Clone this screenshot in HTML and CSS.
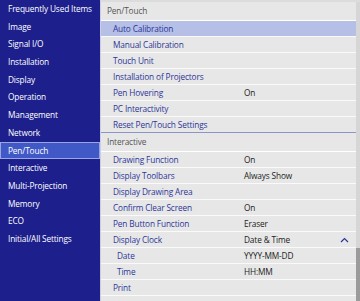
FILE: index.html
```html
<!DOCTYPE html>
<html lang="en">
<head>
  <meta charset="UTF-8" />
  <title>Pen/Touch menu</title>
  <link rel="stylesheet" href="styles.css">
</head>
<body>
  <div class="menu">
    <ul class="side">
      <li>Frequently Used Items</li>
      <li>Image</li>
      <li>Signal I/O</li>
      <li>Installation</li>
      <li>Display</li>
      <li>Operation</li>
      <li>Management</li>
      <li>Network</li>
      <li class="current">Pen/Touch</li>
      <li>Interactive</li>
      <li>Multi-Projection</li>
      <li>Memory</li>
      <li>ECO</li>
      <li>Initial/All Settings</li>
    </ul>
    <div class="panel">
      <div class="list">
        <div class="head">Pen/Touch</div>
        <div class="row selected"><span class="label">Auto Calibration</span></div>
        <div class="row"><span class="label">Manual Calibration</span></div>
        <div class="row"><span class="label">Touch Unit</span></div>
        <div class="row"><span class="label">Installation of Projectors</span></div>
        <div class="row"><span class="label">Pen Hovering</span><span class="value">On</span></div>
        <div class="row"><span class="label">PC Interactivity</span></div>
        <div class="row last"><span class="label">Reset Pen/Touch Settings</span></div>
        <div class="head">Interactive</div>
        <div class="row"><span class="label">Drawing Function</span><span class="value">On</span></div>
        <div class="row"><span class="label">Display Toolbars</span><span class="value">Always Show</span></div>
        <div class="row"><span class="label">Display Drawing Area</span></div>
        <div class="row"><span class="label">Confirm Clear Screen</span><span class="value">On</span></div>
        <div class="row"><span class="label">Pen Button Function</span><span class="value">Eraser</span></div>
        <div class="row"><span class="label">Display Clock</span><span class="value">Date &amp; Time</span>
          <svg class="chev" width="9" height="6" viewBox="0 0 9 6"><path d="M1 5 L4.5 1.5 L8 5" fill="none" stroke="#2c3597" stroke-width="1.2"/></svg>
        </div>
        <div class="row sub"><span class="label">Date</span><span class="value">YYYY-MM-DD</span></div>
        <div class="row sub"><span class="label">Time</span><span class="value">HH:MM</span></div>
        <div class="row"><span class="label">Print</span></div>
      </div>
      <div class="scroll"><div class="thumb"></div></div>
    </div>
  </div>
</body>
</html>
```

FILE: styles.css
```css
body {
  margin: 0;
  font-family: "Open Sans", "Noto Sans", sans-serif;
  font-size: 8.3px;
  letter-spacing: -0.15px;
  background: #1c1f8c;
}

.menu {
  display: flex;
  width: 360px;
  height: 301px;
  overflow: hidden;
}

.side {
  width: 100px;
  margin: 0;
  padding: 0;
  list-style: none;
  background: #1c1f8c;
  color: #fff;
}

.side li {
  height: 17.7px;
  line-height: 17.7px;
  padding-left: 8px;
  box-sizing: border-box;
  white-space: nowrap;
}

.side li.current {
  background: #4059c6;
  border: 1px solid #9aa6e2;
  line-height: 15.7px;
  padding-left: 7px;
}

.panel {
  flex: 1;
  display: flex;
  background: #e7e7e7;
  border-left: 1px solid #c9cde6;
  border-top: 2px solid #dcdcdc;
}

.list {
  flex: 1;
}

.head {
  height: 19px;
  line-height: 17px;
  padding-left: 6px;
  color: #555;
  border-bottom: 1px solid #fff;
  box-sizing: border-box;
}

.row {
  display: flex;
  align-items: center;
  height: 16px;
  border-bottom: 1px solid #fafafa;
  box-sizing: border-box;
  padding-left: 12px;
  color: #2c3597;
}

.row.selected {
  background: #b6bfe6;
}

.row.last {
  border-bottom: 1px solid #8d95c8;
}

.row .label {
  width: 131px;
}

.row.sub .label {
  width: 127px;
  padding-left: 4px;
}

.row .value {
  color: #222;
}

.chev {
  margin-left: auto;
  margin-right: 7px;
}

.scroll {
  width: 4px;
  background: #d6d6d6;
  position: relative;
}

.scroll .thumb {
  position: absolute;
  left: 0;
  right: 0;
  top: 246px;
  bottom: 0;
  background: #9b9b9b;
}
```
